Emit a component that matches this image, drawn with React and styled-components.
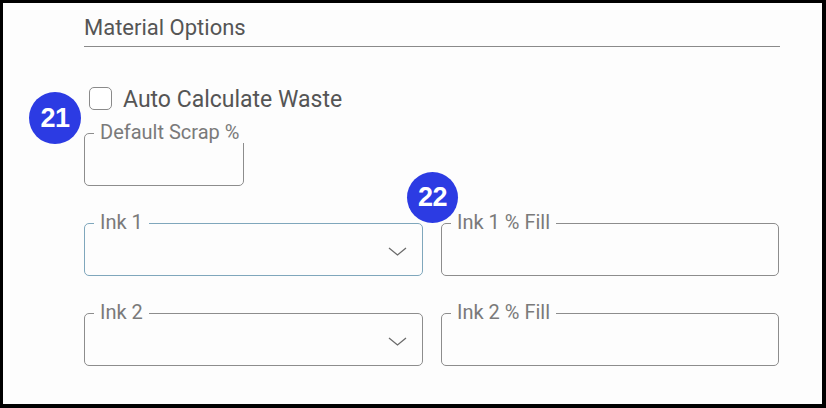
import React from 'react';
import styled, { createGlobalStyle } from 'styled-components';

const GlobalStyle = createGlobalStyle`
  html, body {
    margin: 0;
    padding: 0;
    background: #000000;
  }
  * {
    box-sizing: border-box;
  }
`;

const Frame = styled.div`
  position: relative;
  width: 826px;
  height: 408px;
  background: #fdfdfd;
  border-style: solid;
  border-color: #000000;
  border-width: 3px 4px 4px 3px;
  padding: 12px 42px 0 81px;
  font-family: Roboto, "Liberation Sans", sans-serif;
`;

const Heading = styled.h2`
  margin: 0;
  padding-bottom: 5px;
  border-bottom: 1px solid #8a8a8a;
  font-size: 22px;
  line-height: 26px;
  font-weight: 400;
  color: #555555;
`;

const CheckRow = styled.label`
  display: flex;
  align-items: flex-start;
  gap: 11px;
  margin-top: 39px;
  padding-left: 5px;
  font-size: 23px;
  line-height: 28px;
  color: #555555;
`;

const CheckBox = styled.span`
  width: 23px;
  height: 23px;
  margin-top: 1px;
  border: 1px solid #8a8a8a;
  border-radius: 5px;
  background: #ffffff;
`;

const Outlined = styled.div`
  position: relative;
  width: ${p => p.$width || '100%'};
  height: 53px;
  border: 1px solid ${p => (p.$focused ? '#7fa7bc' : '#8d8d8d')};
  border-radius: 5px;
  display: flex;
  align-items: center;
  justify-content: flex-end;
  padding: 4px 15px 0 0;
`;

const FloatLabel = styled.span`
  position: absolute;
  top: -13px;
  left: 9px;
  padding: 0 6px;
  background: #fdfdfd;
  font-size: 20px;
  line-height: 22px;
  color: #7a7a7a;
  white-space: nowrap;
`;

const ScrapWrap = styled.div`
  margin-top: 19px;
`;

const FieldGrid = styled.div`
  display: grid;
  grid-template-columns: 339px 338px;
  column-gap: 18px;
  row-gap: 37px;
  margin-top: 37px;
`;

const Badge = styled.div`
  position: absolute;
  left: ${p => p.$x}px;
  top: ${p => p.$y}px;
  width: ${p => p.$size}px;
  height: ${p => p.$size}px;
  border-radius: 50%;
  background: #2c3be3;
  color: #ffffff;
  display: flex;
  align-items: center;
  justify-content: center;
  font-family: "Liberation Sans", Arial, sans-serif;
  font-weight: 700;
  font-size: 27px;
  letter-spacing: -0.5px;
`;

const Chevron = () => (
  <svg width="19" height="9" viewBox="0 0 19 9">
    <polyline points="1,1 9.5,8 18,1" fill="none" stroke="#6b6b6b" strokeWidth="1.3" />
  </svg>
);

const Field = ({ label, select, focused, width }) => (
  <Outlined $focused={focused} $width={width}>
    <FloatLabel>{label}</FloatLabel>
    {select && <Chevron />}
  </Outlined>
);

const App = () => {
  return (
    <Frame>
      <GlobalStyle />
      <Heading>Material Options</Heading>
      <CheckRow>
        <CheckBox />
        Auto Calculate Waste
      </CheckRow>
      <ScrapWrap>
        <Field label="Default Scrap %" width="160px" />
      </ScrapWrap>
      <FieldGrid>
        <Field label="Ink 1" select focused />
        <Field label="Ink 1 % Fill" />
        <Field label="Ink 2" select />
        <Field label="Ink 2 % Fill" />
      </FieldGrid>
      <Badge $x={26} $y={89} $size={52}>21</Badge>
      <Badge $x={404} $y={169} $size={51}>22</Badge>
    </Frame>
  );
};

export default App;
